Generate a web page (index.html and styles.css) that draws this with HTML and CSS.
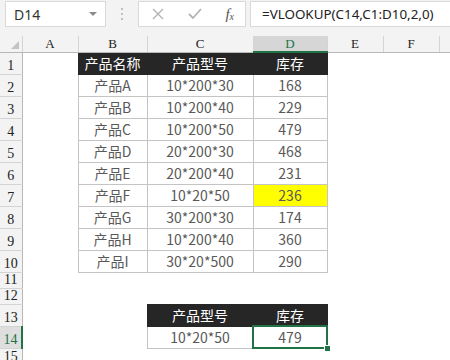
FILE: index.html
```html
<!DOCTYPE html>
<html lang="zh-CN">
<head>
  <meta charset="UTF-8">
  <title>库存查询</title>
  <link rel="stylesheet" href="styles.css">
</head>
<body>
  <div class="toolbar">
    <div class="name-box">
      <span>D14</span>
      <span class="arrow"></span>
    </div>
    <div class="dots">
      <i></i><i></i><i></i>
    </div>
    <div class="buttons">
      <svg width="14" height="14" viewBox="0 0 14 14"><path d="M2 2 L12 12 M12 2 L2 12" stroke="#b4b4b4" stroke-width="1.4" fill="none"/></svg>
      <svg width="16" height="14" viewBox="0 0 16 14"><path d="M2 7 L6 11 L14 2" stroke="#b4b4b4" stroke-width="1.8" fill="none"/></svg>
      <span class="fx">f<sub>x</sub></span>
    </div>
    <div class="formula">=VLOOKUP(C14,C1:D10,2,0)</div>
  </div>

  <table class="sheet">
    <colgroup>
      <col style="width:22px"><col style="width:56px"><col style="width:69px"><col style="width:106px">
      <col style="width:74px"><col style="width:56px"><col style="width:56px"><col style="width:11px">
    </colgroup>
    <tr class="col-head">
      <th class="corner"><span class="tri"></span></th>
      <th>A</th><th>B</th><th>C</th><th class="on">D</th><th>E</th><th>F</th><th></th>
    </tr>
    <tr>
      <th class="row-head">1</th><td></td>
      <td class="hd">产品名称</td><td class="hd">产品型号</td><td class="hd">库存</td><td></td><td></td><td></td>
    </tr>
    <tr><th class="row-head">2</th><td></td><td class="c">产品A</td><td class="c">10*200*30</td><td class="c">168</td><td></td><td></td><td></td></tr>
    <tr><th class="row-head">3</th><td></td><td class="c">产品B</td><td class="c">10*200*40</td><td class="c">229</td><td></td><td></td><td></td></tr>
    <tr><th class="row-head">4</th><td></td><td class="c">产品C</td><td class="c">10*200*50</td><td class="c">479</td><td></td><td></td><td></td></tr>
    <tr><th class="row-head">5</th><td></td><td class="c">产品D</td><td class="c">20*200*30</td><td class="c">468</td><td></td><td></td><td></td></tr>
    <tr><th class="row-head">6</th><td></td><td class="c">产品E</td><td class="c">20*200*40</td><td class="c">231</td><td></td><td></td><td></td></tr>
    <tr><th class="row-head">7</th><td></td><td class="c">产品F</td><td class="c">10*20*50</td><td class="c mark">236</td><td></td><td></td><td></td></tr>
    <tr><th class="row-head">8</th><td></td><td class="c">产品G</td><td class="c">30*200*30</td><td class="c">174</td><td></td><td></td><td></td></tr>
    <tr><th class="row-head">9</th><td></td><td class="c">产品H</td><td class="c">10*200*40</td><td class="c">360</td><td></td><td></td><td></td></tr>
    <tr><th class="row-head">10</th><td></td><td class="c">产品I</td><td class="c">30*20*500</td><td class="c">290</td><td></td><td></td><td></td></tr>
    <tr class="short"><th class="row-head">11</th><td></td><td></td><td></td><td></td><td></td><td></td><td></td></tr>
    <tr class="short"><th class="row-head">12</th><td></td><td></td><td></td><td></td><td></td><td></td><td></td></tr>
    <tr>
      <th class="row-head">13</th><td></td><td></td>
      <td class="hd">产品型号</td><td class="hd">库存</td><td></td><td></td><td></td>
    </tr>
    <tr>
      <th class="row-head on">14</th><td></td><td></td>
      <td class="c">10*20*50</td><td class="c sel">479</td><td></td><td></td><td></td>
    </tr>
    <tr class="last"><th class="row-head">15</th><td></td><td></td><td></td><td></td><td></td><td></td><td></td></tr>
  </table>
</body>
</html>
```

FILE: styles.css
```css
body {
  margin: 0;
  width: 450px;
  height: 360px;
  overflow: hidden;
  background: #fff;
  font-family: "Noto Sans CJK SC", "Noto Sans", sans-serif;
}

/* ---------- 编辑栏 ---------- */
.toolbar {
  display: flex;
  align-items: stretch;
  height: 36px;
  padding-top: 1px;
  box-sizing: border-box;
  background: #f3f3f3;
}

.name-box {
  display: flex;
  align-items: center;
  justify-content: space-between;
  width: 101px;
  height: 26px;
  margin-left: 5px;
  padding: 0 8px;
  box-sizing: border-box;
  background: #fff;
  border: 1px solid #dadada;
  color: #333;
  font-family: "Noto Sans", sans-serif;
  font-size: 14px;
}

.arrow {
  width: 0;
  height: 0;
  border-left: 4px solid transparent;
  border-right: 4px solid transparent;
  border-top: 4px solid #8a8a8a;
}

.dots {
  display: flex;
  flex-direction: column;
  justify-content: center;
  gap: 3px;
  width: 32px;
  height: 26px;
  align-items: center;
}

.dots i {
  width: 2px;
  height: 2px;
  background: #c0c0c0;
}

.buttons {
  display: flex;
  align-items: center;
  justify-content: space-between;
  width: 108px;
  height: 26px;
  padding: 0 11px 0 12px;
  box-sizing: border-box;
  background: #fff;
  border: 1px solid #dadada;
}

.fx {
  font-family: "Liberation Serif", serif;
  font-style: italic;
  font-size: 15px;
  color: #555;
}

.fx sub {
  font-size: 10px;
  vertical-align: -1px;
}

.formula {
  flex: 1;
  height: 26px;
  margin-left: 4px;
  padding-left: 11px;
  line-height: 25px;
  box-sizing: border-box;
  background: #fff;
  border: 1px solid #dadada;
  border-right: none;
  color: #222;
  font-family: "Noto Sans", sans-serif;
  font-size: 13.4px;
}

/* ---------- 表格 ---------- */
.sheet {
  border-collapse: collapse;
  table-layout: fixed;
  width: 450px;
}

.sheet td, .sheet th {
  padding: 0;
  height: 22px;
  box-sizing: border-box;
  text-align: center;
  font-weight: normal;
}

.col-head th {
  height: 16px;
  background: #f3f3f3;
  border-left: 1px solid #d4d4d4;
  border-bottom: 1px solid #b8b8b8;
  color: #222;
  font-family: "Liberation Serif", serif;
  font-size: 13px;
  line-height: 14px;
}

.col-head th.on {
  background: #d6d6d6;
  color: #217346;
  border-bottom: 2px solid #217346;
}

.corner {
  position: relative;
  border-left: none !important;
}

.tri {
  position: absolute;
  right: 3px;
  bottom: 3px;
  width: 0;
  height: 0;
  border-left: 8px solid transparent;
  border-bottom: 8px solid #c4c4c4;
}

.row-head {
  background: #f3f3f3;
  border-right: 1px solid #b8b8b8;
  border-bottom: 1px solid #d4d4d4;
  color: #222;
  font-family: "Liberation Serif", serif;
  font-size: 14px;
  line-height: 14px;
  vertical-align: bottom;
  padding-bottom: 1px !important;
}

.row-head.on {
  background: #dedede;
  color: #217346;
  border-right: 2px solid #217346;
}

.short td, .short th {
  height: 15px;
}

.last th {
  vertical-align: top;
  padding-top: 1px !important;
}

.hd {
  background: #262626;
  border: 1px solid #262626;
  color: #fff;
  font-size: 14px;
}

.c {
  border: 1px solid #c4c4c4;
  color: #595959;
  font-size: 14px;
}

.mark {
  background: #ffff00;
}

.sel {
  position: relative;
  outline: 2px solid #217346;
  outline-offset: -1px;
}

.sel::after {
  content: "";
  position: absolute;
  right: -4px;
  bottom: -4px;
  width: 5px;
  height: 5px;
  background: #217346;
  border: 1px solid #fff;
}
```
